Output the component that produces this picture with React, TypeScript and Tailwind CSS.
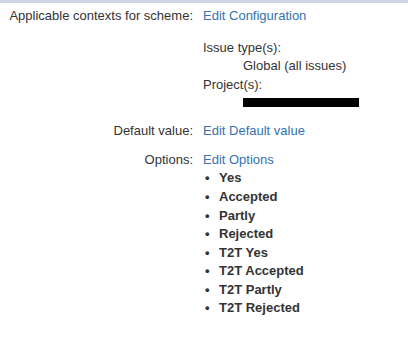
import React from 'react';

const options = ['Yes', 'Accepted', 'Partly', 'Rejected', 'T2T Yes', 'T2T Accepted', 'T2T Partly', 'T2T Rejected'];

const Row: React.FC<{ label: string; children: React.ReactNode; className?: string }> = ({ label, children, className }) => (
    <div className={`flex ${className ?? ''}`}>
        <div className="w-[193px] shrink-0 text-right">{label}</div>
        <div className="ml-[10px] flex-1">{children}</div>
    </div>
);

const App: React.FC = () => {
    return (
        <div
            className="w-[408px] h-[360px] bg-white text-[#333333] text-[13px] leading-[18.57px]"
            style={{ fontFamily: '"Liberation Sans", Arial, sans-serif' }}
        >
            <div className="h-[3px] bg-[#ccd5e3]" />

            {/* Contexts */}
            <Row label="Applicable contexts for scheme:" className="pt-[4px]">
                <a className="text-[#3572b0]">Edit Configuration</a>
                <div className="mt-[13px]">
                    <div>Issue type(s):</div>
                    <div className="pl-[40px]">Global (all issues)</div>
                    <div>Project(s):</div>
                    <div className="pl-[40px] h-[16px] flex items-center">
                        <div className="w-[116px] h-[9px] bg-black" />
                    </div>
                </div>
            </Row>

            {/* Default value */}
            <Row label="Default value:" className="mt-[12px]">
                <a className="text-[#3572b0]">Edit Default value</a>
            </Row>

            {/* Options */}
            <Row label="Options:" className="mt-[10px]">
                <a className="text-[#3572b0]">Edit Options</a>
                <ul className="font-bold">
                    {options.map((opt) => (
                        <li key={opt} className="flex">
                            <span className="w-[16px] pl-[2px]">•</span>
                            <span>{opt}</span>
                        </li>
                    ))}
                </ul>
            </Row>
        </div>
    );
};

export default App;
